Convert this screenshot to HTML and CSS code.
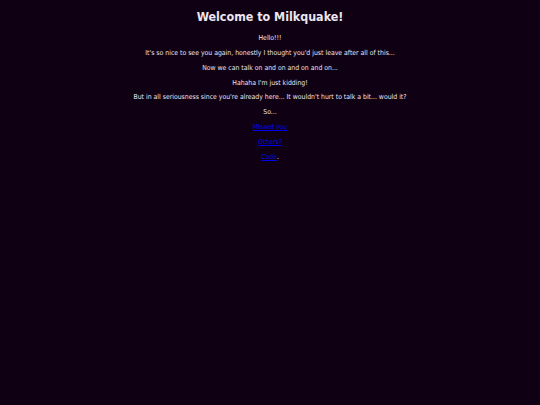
FILE: index.html
```html
<!DOCTYPE html>
<html>
<head>
<meta charset="utf-8">
<title>Milkquake</title>
<link rel="stylesheet" href="styles.css">
</head>
<body>
<main class="page">
<h1 class="title">Welcome to Milkquake!</h1>
<p class="line">Hello!!!</p>
<p class="line">It's so nice to see you again, honestly I thought you'd just leave after all of this...</p>
<p class="line">Now we can talk on and on and on and on...</p>
<p class="line">Hahaha I'm just kidding!</p>
<p class="line">But in all seriousness since you're already here... It wouldn't hurt to talk a bit... would it?</p>
<p class="line">So...</p>
<p class="line"><a class="link" href="#">Missed you</a></p>
<p class="line"><a class="link" href="#">Others?</a></p>
<p class="line"><a class="link" href="#">Code</a>.</p>
</main>
</body>
</html>
```
FILE: styles.css
```css
html, body {
  margin: 0;
  padding: 0;
  background: #100014;
}
.page {
  display: flex;
  flex-direction: column;
  align-items: center;
  padding-top: 8px;
  color: #ece6ee;
  font-family: "DejaVu Sans Condensed", "DejaVu Sans", sans-serif;
  font-stretch: condensed;
  font-size: 6.85px;
}
.title {
  margin: 0 0 6px;
  font-size: 12.4px;
  font-weight: bold;
  line-height: 17px;
}
.line {
  margin: 0;
  line-height: 14.85px;
}
.link {
  color: #0000ee;
}
```
